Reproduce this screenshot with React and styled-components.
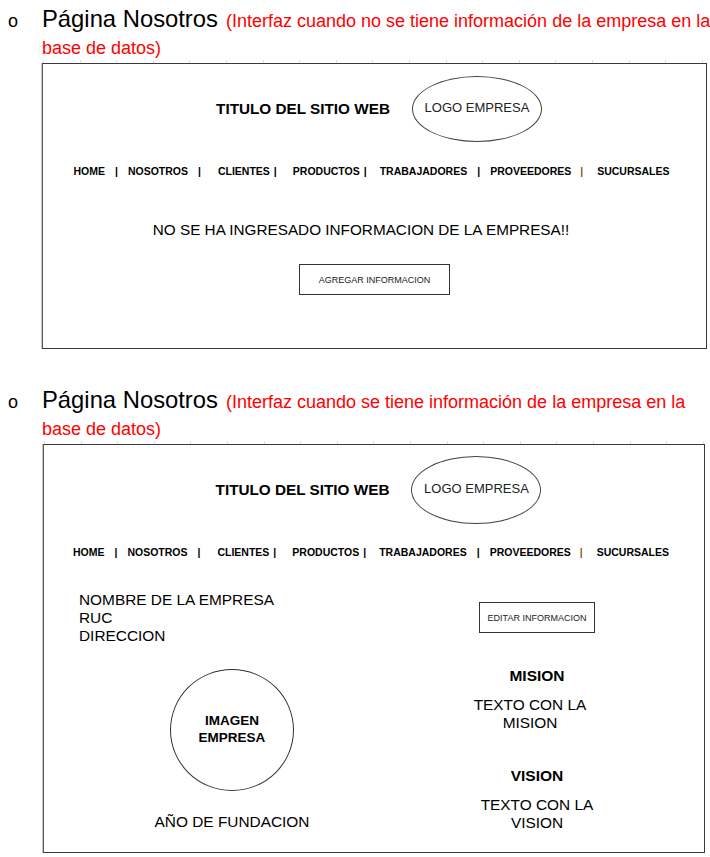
import React from "react";
import styled, { createGlobalStyle } from "styled-components";

const GlobalStyle = createGlobalStyle`
  html, body { margin: 0; padding: 0; background: #fff; }
  body { font-family: "Liberation Sans", Arial, sans-serif; color: #000; }
`;

const Page = styled.div`
  width: 710px;
  padding-top: 8px;
`;

const Section = styled.section`
  & + & { margin-top: 40px; }
`;

const Heading = styled.div`
  display: grid;
  grid-template-columns: 42px 1fr;
  font-size: 18px;
  line-height: 27px;
`;

const Bullet = styled.span`
  font-size: 18px;
  line-height: 27px;
  padding-left: 8px;
`;

const HeadText = styled.div`
  white-space: nowrap;
`;

const PageName = styled.span`
  font-size: 23.8px;
  line-height: 20px;
  margin-right: 8px;
`;

const Note = styled.span`
  color: #ff0000;
  font-size: 18px;
  line-height: 27px;
`;

const Frame = styled.div`
  position: relative;
  box-sizing: border-box;
  margin: 1px 0 0 ${(p) => p.$left}px;
  width: ${(p) => p.$width}px;
  height: ${(p) => p.$height}px;
  border: 1px solid #3a3a3a;
  border-left-color: #5a5a5a;
  box-shadow: -1px 0 0 #c4c4c4;
  display: flex;
  flex-direction: column;
  &::before {
    content: "";
    position: absolute;
    left: 0;
    right: 0;
    top: -4px;
    height: 3px;
    background: repeating-linear-gradient(90deg, #dedede 0 1px, transparent 1px 36.6px);
  }
`;

const Header = styled.header`
  display: flex;
  align-items: center;
  justify-content: center;
  gap: 22px;
  padding-left: 9px;
  margin-top: ${(p) => p.$top}px;
`;

const SiteTitle = styled.h1`
  margin: 0;
  font-size: 15.3px;
  font-weight: 700;
  line-height: 18px;
`;

const Logo = styled.div`
  box-sizing: border-box;
  width: 130px;
  height: ${(p) => p.$h}px;
  border: 1px solid #444;
  border-radius: 50%;
  display: flex;
  align-items: center;
  justify-content: center;
  padding-bottom: 4px;
  font-size: 13px;
  color: #222;
`;

const Nav = styled.nav`
  display: flex;
  align-items: center;
  justify-content: center;
  padding-right: 6px;
  margin-top: ${(p) => p.$top}px;
  font-size: 10.5px;
  font-weight: 700;
  line-height: 14px;
  white-space: nowrap;
`;

const NavLink = styled.span`
  margin-left: ${(p) => p.$ml || 0}px;
`;

const Sep = styled.span`
  margin-left: ${(p) => p.$ml}px;
  color: ${(p) => (p.$brown ? "#8a5520" : "#000")};
`;

const Message = styled.p`
  margin: 43px 0 0;
  padding-right: 27px;
  text-align: center;
  font-size: 15.3px;
  line-height: 18px;
`;

const OutlineButton = styled.button`
  box-sizing: border-box;
  width: ${(p) => p.$w}px;
  height: 31px;
  margin-top: ${(p) => p.$top}px;
  padding: 0;
  background: #fff;
  border: 1px solid #333;
  border-radius: 0;
  font-family: "Liberation Sans", Arial, sans-serif;
  font-size: 9px;
  color: #222;
  align-self: center;
`;

const Body = styled.div`
  display: grid;
  grid-template-columns: 376px 234px;
  margin-top: 32px;
`;

const Column = styled.div`
  display: flex;
  flex-direction: column;
  align-items: center;
`;

const InfoList = styled.div`
  align-self: stretch;
  padding-left: 35px;
  font-size: 15.4px;
  line-height: 18px;
`;

const ImageCircle = styled.div`
  box-sizing: border-box;
  width: 124px;
  height: 122px;
  margin-top: 24px;
  border: 1px solid #333;
  border-radius: 50%;
  display: flex;
  align-items: center;
  justify-content: center;
  padding-bottom: 3px;
  text-align: center;
  font-size: 13.5px;
  font-weight: 700;
  line-height: 17px;
`;

const PlainText = styled.div`
  margin-top: ${(p) => p.$top}px;
  padding-right: ${(p) => p.$shift || 0}px;
  text-align: center;
  font-size: 15.4px;
  line-height: 18px;
`;

const SubTitle = styled.h2`
  margin: ${(p) => p.$top}px 0 0;
  font-size: 15.5px;
  font-weight: 700;
  line-height: 18px;
`;

function SiteNav({ top }) {
  return (
    <Nav $top={top}>
      <NavLink>HOME</NavLink>
      <Sep $ml={10}>|</Sep>
      <NavLink $ml={10}>NOSOTROS</NavLink>
      <Sep $ml={10}>|</Sep>
      <NavLink $ml={17}>CLIENTES</NavLink>
      <Sep $ml={4}>|</Sep>
      <NavLink $ml={16}>PRODUCTOS</NavLink>
      <Sep $ml={4}>|</Sep>
      <NavLink $ml={13}>TRABAJADORES</NavLink>
      <Sep $ml={10}>|</Sep>
      <NavLink $ml={10}>PROVEEDORES</NavLink>
      <Sep $ml={9} $brown>|</Sep>
      <NavLink $ml={14}>SUCURSALES</NavLink>
    </Nav>
  );
}

function SiteHeader({ top, logoH }) {
  return (
    <Header $top={top}>
      <SiteTitle>TITULO DEL SITIO WEB</SiteTitle>
      <Logo $h={logoH}>LOGO EMPRESA</Logo>
    </Header>
  );
}

function SectionHeading({ note }) {
  return (
    <Heading>
      <Bullet>o</Bullet>
      <HeadText>
        <PageName>Página Nosotros</PageName>
        <Note>
          {note}
          <br />
          base de datos)
        </Note>
      </HeadText>
    </Heading>
  );
}

export default function App() {
  return (
    <Page>
      <GlobalStyle />
      <Section>
        <SectionHeading note="(Interfaz cuando no se tiene información de la empresa en la" />
        <Frame $left={42} $width={665} $height={286}>
          <SiteHeader top={12} logoH={66} />
          <SiteNav top={22} />
          <Message>NO SE HA INGRESADO INFORMACION DE LA EMPRESA!!</Message>
          <OutlineButton $w={151} $top={25}>AGREGAR INFORMACION</OutlineButton>
        </Frame>
      </Section>
      <Section>
        <SectionHeading note="(Interfaz cuando se tiene información de la empresa en la" />
        <Frame $left={43} $width={662} $height={409}>
          <SiteHeader top={11} logoH={68} />
          <SiteNav top={21} />
          <Body>
            <Column>
              <InfoList>
                NOMBRE DE LA EMPRESA
                <br />
                RUC
                <br />
                DIRECCION
              </InfoList>
              <ImageCircle>
                IMAGEN
                <br />
                EMPRESA
              </ImageCircle>
              <PlainText $top={22}>AÑO DE FUNDACION</PlainText>
            </Column>
            <Column>
              <OutlineButton $w={116} $top={11}>EDITAR INFORMACION</OutlineButton>
              <SubTitle $top={34}>MISION</SubTitle>
              <PlainText $top={11} $shift={14}>
                TEXTO CON LA
                <br />
                MISION
              </PlainText>
              <SubTitle $top={35}>VISION</SubTitle>
              <PlainText $top={11}>
                TEXTO CON LA
                <br />
                VISION
              </PlainText>
            </Column>
          </Body>
        </Frame>
      </Section>
    </Page>
  );
}
